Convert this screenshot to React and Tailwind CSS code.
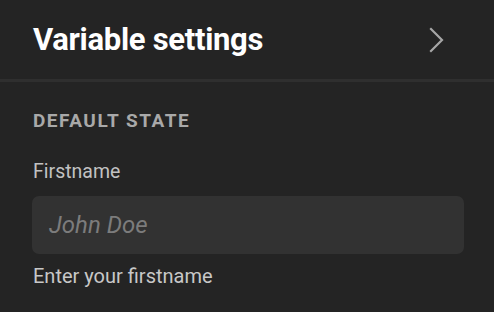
import React from 'react';

const font = { fontFamily: 'Roboto, "Liberation Sans", sans-serif' };

const Chevron = () => (
    <svg width="16" height="26" viewBox="0 0 16 26" fill="none" className="text-[#a6a6a6]">
        <path d="M2 2 L13 13 L2 24" stroke="currentColor" strokeWidth="2.2" strokeLinecap="square" />
    </svg>
);

const App = () => {
    return (
        <div className="w-[494px] h-[312px] bg-[#242424] overflow-hidden" style={font}>
            <div className="h-[82px] flex items-center justify-between pl-[33px] pr-[49px] border-b-[3px] border-[#2f2f2f]">
                <h1 className="text-[31px] font-bold text-white leading-none tracking-[-0.3px]">Variable settings</h1>
                <Chevron />
            </div>
            <div className="pl-[32px] pr-[30px] pt-[27px]">
                <h2 className="text-[19px] font-bold text-[#a9a9a9] tracking-[1.5px] leading-[24px] pl-px">DEFAULT STATE</h2>
                <label className="block mt-[27px] text-[19.5px] text-[#c2c2c2] leading-[24px] pl-px">Firstname</label>
                <div className="mt-[12px] h-[58px] bg-[#323232] rounded-[7px] flex items-center px-[17px]">
                    <span className="text-[24px] italic text-[#7c7c7c]">John Doe</span>
                </div>
                <p className="mt-[10px] text-[20px] text-[#c8c8c8] leading-[24px] pl-px">Enter your firstname</p>
            </div>
        </div>
    );
};

export default App;
